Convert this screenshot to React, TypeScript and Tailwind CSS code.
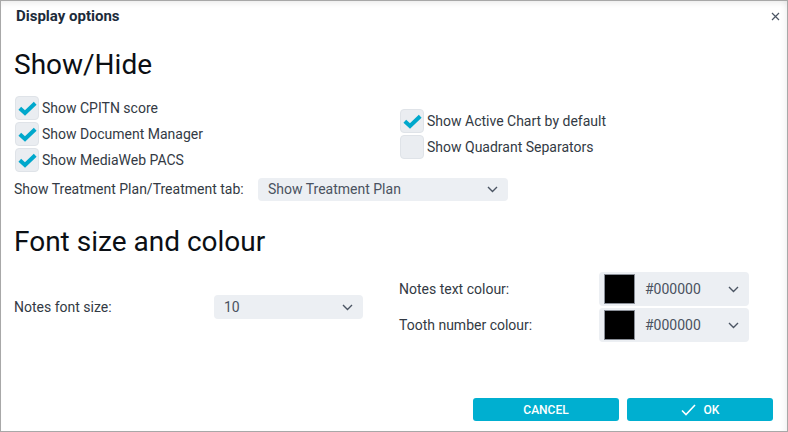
import React from "react";

const Check = () => (
  <svg width="19" height="15" viewBox="0 0 19 15" fill="none">
    <path d="M1.8 7.2 L7 12 L17.2 2.2" stroke="#00a8cc" strokeWidth="4" strokeLinecap="butt" strokeLinejoin="miter" />
  </svg>
);

const Chevron = () => (
  <svg width="11" height="7" viewBox="0 0 11 7" fill="none">
    <path d="M1 1 L5.5 5.5 L10 1" stroke="#4b5563" strokeWidth="1.4" />
  </svg>
);

function Checkbox({ checked, label }: { checked: boolean; label: string }) {
  return (
    <div className="flex items-center h-[26px]">
      <div className="w-[24px] h-[24px] rounded-[4px] bg-[#eaedf1] border border-[#dfe3e8] flex items-center justify-center ml-[1px]">
        {checked && <Check />}
      </div>
      <span className="ml-[3px] text-[14px] text-[#333a44]">{label}</span>
    </div>
  );
}

function ColourPicker() {
  return (
    <div className="w-[150px] h-[34px] rounded-[4px] bg-[#eceff3] flex items-center pl-[5px] pr-[10px]">
      <div className="w-[31px] h-[30px] bg-black border border-[#8a8f98]" />
      <span className="ml-[10px] text-[14px] text-[#4a5260] flex-1">#000000</span>
      <Chevron />
    </div>
  );
}

export default function App() {
  return (
    <div
      className="w-[788px] h-[432px] bg-white border border-[#a8a8a8] flex flex-col shadow-[inset_0_6px_6px_-4px_rgba(0,0,0,0.08),inset_-6px_0_6px_-4px_rgba(0,0,0,0.06)]"
      style={{ fontFamily: "Roboto, 'Liberation Sans', sans-serif" }}
    >
      <div className="h-[31px] flex items-center justify-between pl-[15px] pr-[7px] shrink-0">
        <span className="text-[15px] font-bold text-[#1c2b3a]">Display options</span>
        <svg width="9" height="9" viewBox="0 0 9 9">
          <path d="M1 1 L8 8 M8 1 L1 8" stroke="#4b5563" strokeWidth="1.2" />
        </svg>
      </div>
      <div className="px-[13px] flex-1 flex flex-col">
        <h1 className="text-[28px] leading-[32px] text-[#0b0f14] mt-[17px]">Show/Hide</h1>
        <div className="flex mt-[14px]">
          <div className="w-[385px] flex flex-col">
            <Checkbox checked label="Show CPITN score" />
            <Checkbox checked label="Show Document Manager" />
            <Checkbox checked label="Show MediaWeb PACS" />
          </div>
          <div className="flex flex-col justify-center">
            <Checkbox checked label="Show Active Chart by default" />
            <Checkbox checked={false} label="Show Quadrant Separators" />
          </div>
        </div>
        <div className="flex items-center mt-[5px]">
          <span className="w-[244px] text-[14px] text-[#333a44]">Show Treatment Plan/Treatment tab:</span>
          <div className="w-[250px] h-[23px] rounded-[4px] bg-[#eceff3] flex items-center pl-[10px] pr-[10px]">
            <span className="flex-1 text-[14px] text-[#4a5260]">Show Treatment Plan</span>
            <Chevron />
          </div>
        </div>
        <h1 className="text-[28px] leading-[32px] text-[#0b0f14] mt-[25px]">Font size and colour</h1>
        <div className="flex mt-[14px]">
          <div className="w-[385px] flex items-center">
            <span className="w-[200px] text-[14px] text-[#333a44]">Notes font size:</span>
            <div className="w-[149px] h-[24px] rounded-[4px] bg-[#eceff3] flex items-center pl-[10px] pr-[10px]">
              <span className="flex-1 text-[14px] text-[#4a5260]">10</span>
              <Chevron />
            </div>
          </div>
          <div className="flex flex-col gap-[2px]">
            <div className="flex items-center">
              <span className="w-[200px] text-[14px] text-[#333a44]">Notes text colour:</span>
              <ColourPicker />
            </div>
            <div className="flex items-center">
              <span className="w-[200px] text-[14px] text-[#333a44]">Tooth number colour:</span>
              <ColourPicker />
            </div>
          </div>
        </div>
        <div className="flex-1" />
      </div>
      <div className="flex justify-end gap-[8px] pr-[14px] pb-[10px] shrink-0">
        <button className="w-[146px] h-[23px] rounded-[3px] bg-[#00afd0] text-white text-[12px] font-medium">CANCEL</button>
        <button className="w-[146px] h-[23px] rounded-[3px] bg-[#00afd0] text-white text-[12px] font-medium flex items-center justify-center gap-[8px]">
          <svg width="15" height="12" viewBox="0 0 15 12" fill="none">
            <path d="M1 6.5 L5 10.5 L14 1" stroke="white" strokeWidth="1.6" />
          </svg>
          OK
        </button>
      </div>
    </div>
  );
}
